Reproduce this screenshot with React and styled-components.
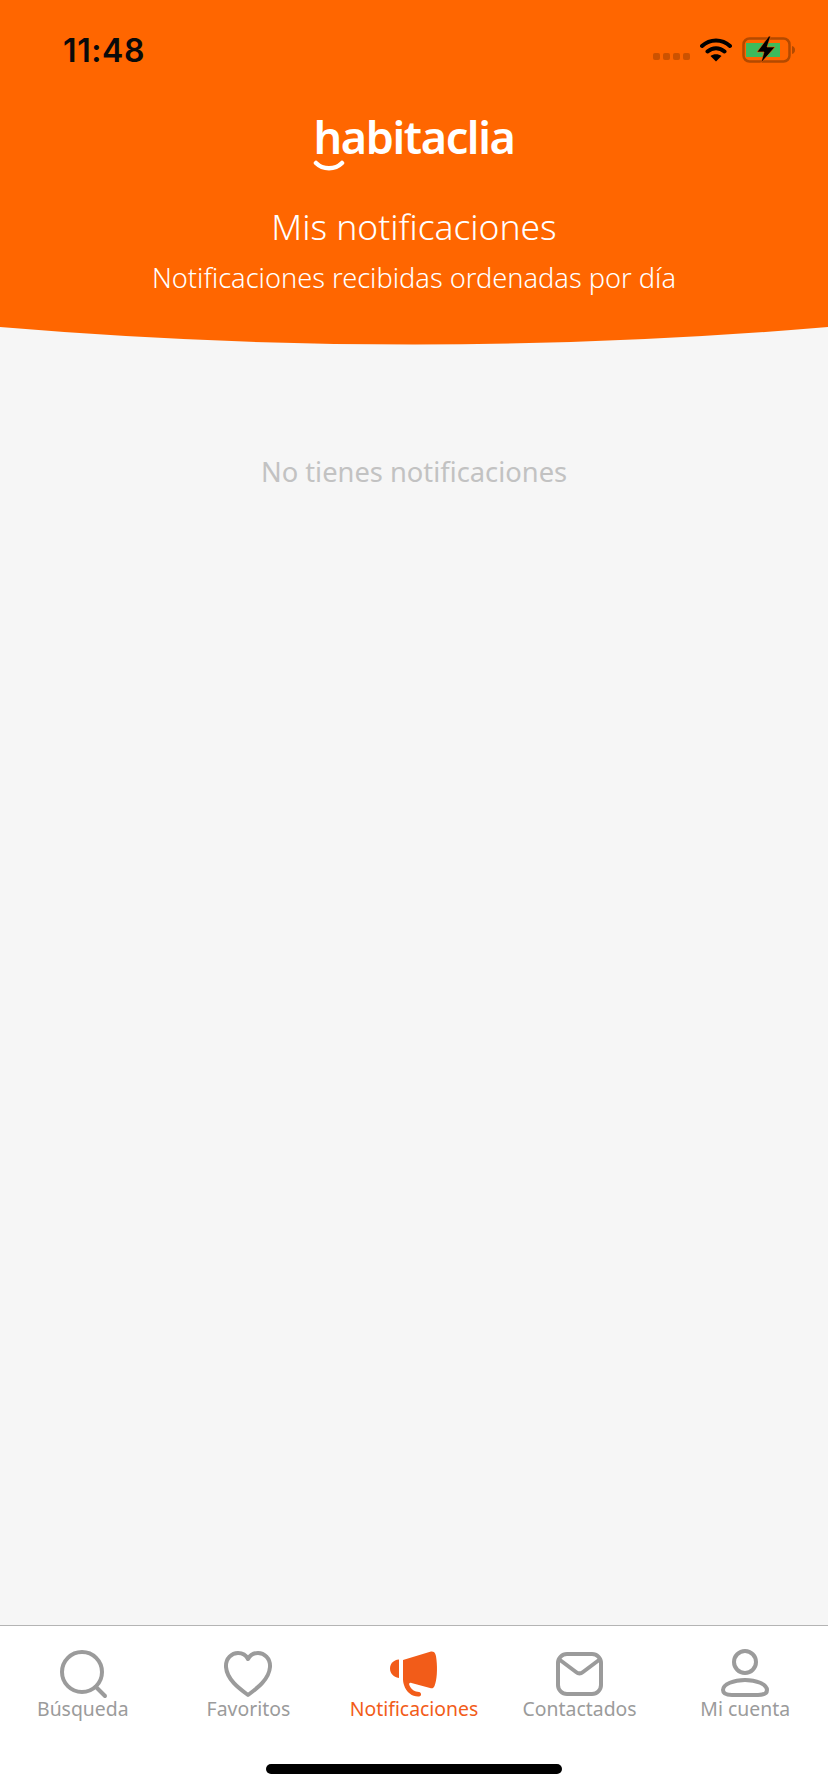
import React from "react";
import styled, { createGlobalStyle } from "styled-components";

const ORANGE = "#ff6600";
const ACTIVE = "#f25c19";
const GREY = "#9b9b9b";
const FONT = `"Noto Sans", "Open Sans", sans-serif`;

const GlobalStyle = createGlobalStyle`
  html, body {
    margin: 0;
    padding: 0;
    background: #f6f6f6;
  }
  * {
    box-sizing: border-box;
  }
`;

const Page = styled.div`
  width: 828px;
  height: 1792px;
  display: flex;
  flex-direction: column;
  overflow: hidden;
  font-family: ${FONT};
  background: #f6f6f6;
`;

const Header = styled.header`
  height: 327px;
  background: ${ORANGE};
  display: flex;
  flex-direction: column;
  align-items: center;
  color: #fff;
`;

const HeaderCurve = styled.svg`
  display: block;
  width: 828px;
  height: 18px;
  flex: none;
`;

const StatusBar = styled.div`
  width: 100%;
  height: 100px;
  padding: 33px 32px 0 63px;
  display: flex;
  justify-content: space-between;
  align-items: flex-start;
`;

const Clock = styled.span`
  font-family: Inter, "Noto Sans", sans-serif;
  font-size: 32px;
  line-height: 36px;
  font-weight: 600;
  color: #0a0a0a;
  letter-spacing: 0.6px;
`;

const StatusIcons = styled.div`
  display: flex;
  align-items: center;
  gap: 10px;
  margin-top: 2px;
`;

const SignalDots = styled.div`
  display: flex;
  gap: 3px;
  margin-top: 14px;
`;

const SignalDot = styled.i`
  display: block;
  width: 7px;
  height: 7px;
  border-radius: 2px;
  background: #cc5200;
`;

const Logo = styled.div`
  position: relative;
  height: 60px;
  margin-top: 14px;
  font-size: 45px;
  line-height: 45px;
  font-weight: 600;
  letter-spacing: -1.4px;
`;

const LogoSmile = styled.svg`
  position: absolute;
  left: -1px;
  top: 46px;
`;

const Title = styled.h1`
  margin: 29px 0 0;
  font-size: 35.4px;
  line-height: 46px;
  font-weight: 300;
`;

const Subtitle = styled.p`
  margin: 11px 0 0;
  font-size: 27.2px;
  line-height: 36px;
  font-weight: 300;
`;

const Content = styled.main`
  flex: 1;
  display: flex;
  justify-content: center;
  padding-top: 107px;
`;

const EmptyText = styled.p`
  margin: 0;
  font-size: 27.3px;
  line-height: 40px;
  font-weight: 400;
  color: #c2c2c2;
`;

const TabBar = styled.footer`
  height: 167px;
  flex: none;
  background: #fff;
  border-top: 1px solid #b4b4b4;
  display: flex;
  flex-direction: column;
`;

const TabRow = styled.nav`
  display: grid;
  grid-template-columns: repeat(5, 1fr);
  padding-top: 23px;
`;

const Tab = styled.div`
  display: flex;
  flex-direction: column;
  align-items: center;
  color: ${(props) => (props.$active ? ACTIVE : GREY)};
`;

const TabIcon = styled.svg`
  display: block;
  width: 56px;
  height: 52px;
  fill: none;
  stroke: currentColor;
  stroke-width: 4;
  stroke-linecap: round;
  stroke-linejoin: round;
`;

const TabLabel = styled.span`
  font-size: 19.4px;
  line-height: 26px;
  margin-top: -5px;
  white-space: nowrap;
`;

const HomeIndicator = styled.div`
  width: 296px;
  height: 10px;
  border-radius: 5px;
  background: #000;
  margin: 42px auto 0;
`;

const tabs = [
  {
    label: "Búsqueda",
    icon: (
      <>
        <circle cx="27" cy="23" r="20" />
        <path d="M41 38l9 9" />
      </>
    ),
  },
  {
    label: "Favoritos",
    icon: (
      <path d="M28 46 C20 40 7 31 6 18 C5.500 9 12 4 18 4 C22 4 26 6 28 10 C30 6 34 4 38 4 C44 4 50.500 9 50 18 C49 31 36 40 28 46 Z" />
    ),
  },
  {
    label: "Notificaciones",
    active: true,
    icon: (
      <g fill="currentColor" stroke="none" transform="translate(3 1)">
        <path d="M10 9.500 C4 10 1 14 1 18.500 C1 23 4 27 10 28 Z" />
        <path d="M14 10 L42 1.500 C46 1 47 4 47.500 10 C48.500 19 48 30 45.500 36 C44.500 38.500 43 38.500 41 38 L22.500 33 C20.500 32.500 19.500 33.500 20.500 35.500 C21.500 38 23.500 40.500 27 41.500 L30 42 C32.500 42.500 33 46 30 46.500 C24 47 17.500 43 15 35 C14 32 14 30 14 28 Z" />
      </g>
    ),
  },
  {
    label: "Contactados",
    icon: (
      <>
        <rect x="6" y="5" width="43" height="40" rx="9" />
        <path d="M8 11 L24 23 C26.500 25 28.500 25 31 23 L47 11" />
      </>
    ),
  },
  {
    label: "Mi cuenta",
    icon: (
      <>
        <circle cx="28" cy="13" r="11" />
        <path d="M15 46 C9 46 6 44 6 41 C6 35 17 31 28 31 C39 31 50 35 50 41 C50 44 47 46 41 46 Z" />
      </>
    ),
  },
];

export default function App() {
  return (
    <Page>
      <GlobalStyle />
      <Header>
        <StatusBar>
          <Clock>11:48</Clock>
          <StatusIcons>
            <SignalDots>
              <SignalDot />
              <SignalDot />
              <SignalDot />
              <SignalDot />
            </SignalDots>
            <svg width="32" height="25" viewBox="0 0 32 25">
              <path
                d="M2 9 C10 1.500 22 1.500 30 9 M7.500 14.500 C12.500 10 19.500 10 24.500 14.500"
                fill="none"
                stroke="#000"
                strokeWidth="4"
                strokeLinecap="round"
              />
              <path d="M10.500 19 C13.500 16.500 18.500 16.500 21.500 19 L16 24.500 Z" fill="#000" />
            </svg>
            <svg width="54" height="28" viewBox="0 0 54 28">
              <rect x="1.500" y="3.500" width="46" height="23" rx="6" fill="none" stroke="#b34a00" strokeWidth="2.500" />
              <path d="M50 11 C52 11.500 53 13 53 15 C53 17 52 18.500 50 19 Z" fill="#b34a00" />
              <rect x="4" y="8" width="34" height="14" fill="#3dbb5c" />
              <path d="M27 1 L15 17 L22 17 L19 28 L33 12 L25 12 L28.500 1.500 Z" fill="#000" stroke={ORANGE} strokeWidth="0.600" />
            </svg>
          </StatusIcons>
        </StatusBar>
        <Logo>
          habitaclia
          <LogoSmile width="32" height="14" viewBox="0 0 32 14">
            <path d="M3 3 C10 10 22 10 29 3" fill="none" stroke="#fff" strokeWidth="4.500" strokeLinecap="round" />
          </LogoSmile>
        </Logo>
        <Title>Mis notificaciones</Title>
        <Subtitle>Notificaciones recibidas ordenadas por día</Subtitle>
      </Header>
      <HeaderCurve viewBox="0 0 828 18" preserveAspectRatio="none">
        <path d="M0 0 H828 Q414 35 0 0 Z" fill={ORANGE} />
      </HeaderCurve>
      <Content>
        <EmptyText>No tienes notificaciones</EmptyText>
      </Content>
      <TabBar>
        <TabRow>
          {tabs.map((tab) => (
            <Tab key={tab.label} $active={tab.active}>
              <TabIcon viewBox="0 0 56 52">{tab.icon}</TabIcon>
              <TabLabel>{tab.label}</TabLabel>
            </Tab>
          ))}
        </TabRow>
        <HomeIndicator />
      </TabBar>
    </Page>
  );
}
